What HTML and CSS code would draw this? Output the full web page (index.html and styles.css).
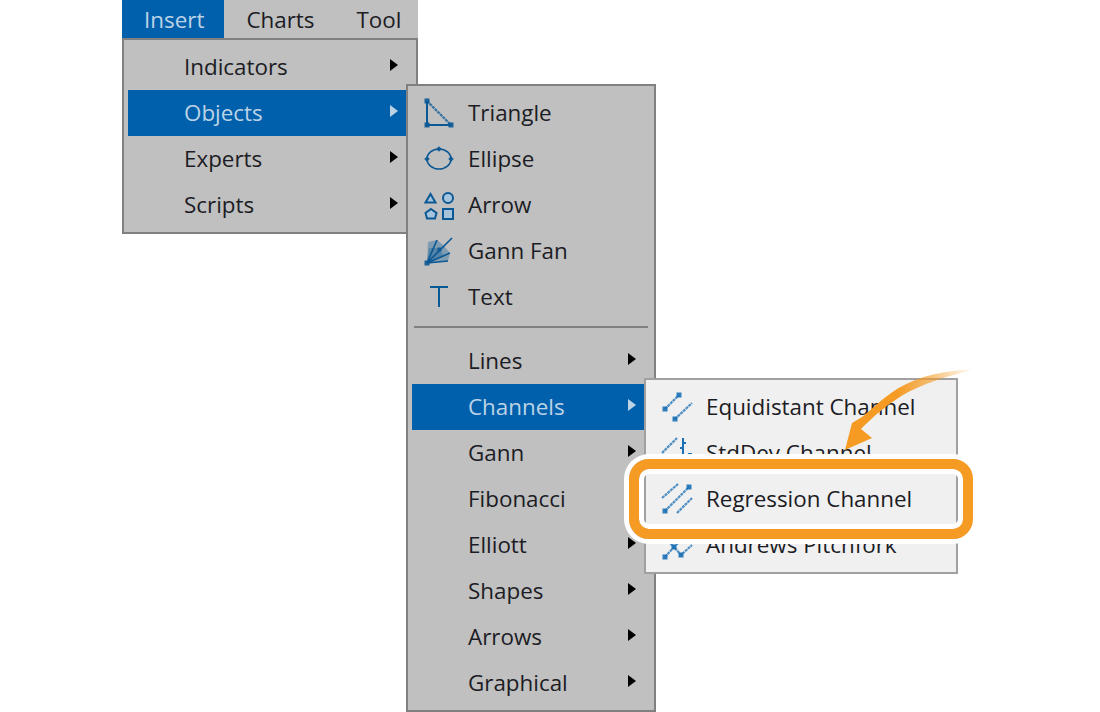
FILE: index.html
```html
<!DOCTYPE html>
<html lang="en">
<head>
<meta charset="utf-8">
<title>Insert menu</title>
<link rel="stylesheet" href="styles.css">
</head>
<body>
<div class="page">
  <div class="menubar">
    <div class="bar-item active">Insert</div>
    <div class="bar-item">Charts</div>
    <div class="bar-item">Tool</div>
  </div>
  <div class="menu menu-root">
    <div class="item"><span class="slot"></span><span class="label">Indicators</span><span class="caret"></span></div>
    <div class="item active">
      <span class="slot"></span><span class="label">Objects</span><span class="caret"></span>
      <div class="menu flyout menu-objects">
        <div class="item">
          <span class="slot"><svg class="icon" viewBox="0 0 30 30"><path class="ln" d="M3 3V27H27"/><path class="ds" d="M3 3 27 27"/><rect class="nd" x=".5" y=".5" width="5" height="5"/><rect class="nd" x=".5" y="24.500" width="5" height="5"/><rect class="nd" x="24.500" y="24.500" width="5" height="5"/></svg></span>
          <span class="label">Triangle</span>
        </div>
        <div class="item">
          <span class="slot"><svg class="icon" viewBox="0 0 30 30"><ellipse class="ln thin" cx="15" cy="15" rx="12" ry="10"/><rect class="nd" x="13" y="3" width="4" height="4" transform="rotate(45 15 5)"/><rect class="nd" x="1" y="13" width="4" height="4" transform="rotate(45 3 15)"/><rect class="nd" x="25" y="13" width="4" height="4" transform="rotate(45 27 15)"/></svg></span>
          <span class="label">Ellipse</span>
        </div>
        <div class="item">
          <span class="slot"><svg class="icon" viewBox="0 0 30 30"><path class="shp" d="M6.500 4 11.500 12.500H1.500Z"/><circle class="shp" cx="24" cy="8" r="5"/><path class="shp" d="M7 19 12.500 23 11 28.500H3L1.500 23Z"/><rect class="shp" x="19" y="19" width="10" height="10"/></svg></span>
          <span class="label">Arrow</span>
        </div>
        <div class="item">
          <span class="slot"><svg class="icon" viewBox="0 0 30 30"><path class="fan" d="M3 27 4 6 13 4 19 9 26 17 24 25Z"/><path class="fan" d="M3 27 5 12 14 12 20 20Z"/><path class="ln thin" d="M3 27 28 2M3 27 13 4M3 27 26 17M3 27 24 25"/><rect class="nd" x=".5" y="24.500" width="5" height="5"/><rect class="nd" x="13.500" y="11.500" width="4" height="4"/></svg></span>
          <span class="label">Gann Fan</span>
        </div>
        <div class="item">
          <span class="slot"><svg class="icon" viewBox="0 0 30 30"><path class="ln" d="M6 5H24M15 5V25"/></svg></span>
          <span class="label">Text</span>
        </div>
        <div class="sep"></div>
        <div class="item"><span class="slot"></span><span class="label">Lines</span><span class="caret"></span></div>
        <div class="item active">
          <span class="slot"></span><span class="label">Channels</span><span class="caret"></span>
          <div class="menu flyout menu-channels">
            <div class="item">
              <span class="slot"><svg class="icon light" viewBox="0 0 30 30"><path class="ds" d="M3 17 17 3M13 27 30 11"/><rect class="nd" x=".5" y="14.500" width="5" height="5"/><rect class="nd" x="14.500" y=".5" width="5" height="5"/><rect class="nd" x="10.500" y="24.500" width="5" height="5"/></svg></span>
              <span class="label">Equidistant Channel</span>
            </div>
            <div class="item">
              <span class="slot"><svg class="icon light" viewBox="0 0 30 30"><path class="ds" d="M0 15 15 0M0 27 8 19"/><path class="ln" d="M21 0V24M18 10H21M21 5H24M26 16H30"/></svg></span>
              <span class="label">StdDev Channel</span>
            </div>
            <div class="item">
              <span class="slot"><svg class="icon light" viewBox="0 0 30 30"><path class="ds" d="M0 14 16 0M3 27 27 3M15 29 30 14"/><rect class="nd" x=".5" y="24.500" width="5" height="5"/><rect class="nd" x="24.500" y=".5" width="5" height="5"/></svg></span>
              <span class="label">Regression Channel</span>
            </div>
            <div class="item">
              <span class="slot"><svg class="icon light" viewBox="0 0 30 30"><path class="ds" d="M3 27 12 17 19 25 30 15M6 11 12 17 18 11"/><rect class="nd" x=".5" y="24.500" width="5" height="5"/><rect class="nd" x="9.500" y="14.500" width="5" height="5"/><rect class="nd" x="16.500" y="22.500" width="5" height="5"/></svg></span>
              <span class="label">Andrews Pitchfork</span>
            </div>
          </div>
        </div>
        <div class="item"><span class="slot"></span><span class="label">Gann</span><span class="caret"></span></div>
        <div class="item"><span class="slot"></span><span class="label">Fibonacci</span><span class="caret"></span></div>
        <div class="item"><span class="slot"></span><span class="label">Elliott</span><span class="caret"></span></div>
        <div class="item"><span class="slot"></span><span class="label">Shapes</span><span class="caret"></span></div>
        <div class="item"><span class="slot"></span><span class="label">Arrows</span><span class="caret"></span></div>
        <div class="item"><span class="slot"></span><span class="label">Graphical</span><span class="caret"></span></div>
      </div>
    </div>
    <div class="item"><span class="slot"></span><span class="label">Experts</span><span class="caret"></span></div>
    <div class="item"><span class="slot"></span><span class="label">Scripts</span><span class="caret"></span></div>
  </div>
  <svg class="pointer" viewBox="0 0 140 90">
    <defs>
      <linearGradient id="tail" x1="135" y1="0" x2="57" y2="0" gradientUnits="userSpaceOnUse">
        <stop offset="0" stop-color="#f59b23" stop-opacity="0"/>
        <stop offset="0.55" stop-color="#f59b23" stop-opacity="0.6"/>
        <stop offset="1" stop-color="#f59b23"/>
      </linearGradient>
    </defs>
    <path fill="url(#tail)" d="M135 4C105 6 80 10 57 24C44 32 32 44 22 52L12 58L5 85L32 73L21 64C33 52 45 41 63 30C82 19 105 12 135 4Z"/>
  </svg>
  <div class="callout"></div>
</div>
</body>
</html>
```
FILE: styles.css
```css
* { box-sizing: border-box; }
html, body { margin: 0; padding: 0; background: #fff; }
.page {
  position: relative;
  width: 1100px;
  height: 712px;
  overflow: hidden;
  font-family: "Open Sans", "Noto Sans", sans-serif;
  font-size: 22.4px;
  color: #1c1c24;
}
.menubar {
  display: flex;
  width: 296px;
  height: 38px;
  margin-left: 122px;
  background: #c0c0c0;
  overflow: hidden;
}
.bar-item {
  height: 38px;
  padding: 0 20px 0 22px;
  line-height: 39px;
  white-space: nowrap;
}
.bar-item.active { background: #0060ac; color: #bcd3e6; }
.menu {
  display: flex;
  flex-direction: column;
  padding: 4px;
  background: #c0c0c0;
  border: 2px solid #808080;
}
.menu-root { width: 296px; margin-left: 122px; height: 196px; }
.flyout { position: absolute; top: -6px; left: calc(100% - 6px); }
.menu-objects { width: 250px; height: 628px; }
.menu-channels { width: 314px; height: 196px; background: #f0f0f0; border-color: #a0a0a0; }
.item {
  position: relative;
  display: flex;
  align-items: center;
  flex: none;
  height: 46px;
  white-space: nowrap;
}
.item.active { background: #0060ac; }
.item.active > .label { color: #bcd3e6; }
.item.active > .caret { border-left-color: #bcd3e6; }
.menu .menu .label { color: #1c1c24; }
.menu .item.active .menu .label { color: #1c1c24; }
.menu .menu > .item.active > .label { color: #bcd3e6; }
.menu .menu .menu > .item > .label { color: #1c1c24; }
.slot { display: flex; flex: none; width: 56px; padding-left: 12px; }
.label { flex: 1; line-height: 46px; }
.caret {
  flex: none;
  width: 0;
  height: 0;
  margin-right: 14px;
  margin-top: -4px;
  border-left: 8px solid #000;
  border-top: 6px solid transparent;
  border-bottom: 6px solid transparent;
}
.sep { flex: none; height: 2px; margin: 6px 0 10px 2px; width: 234px; background: #808080; }
.icon { display: block; width: 30px; height: 30px; overflow: visible; }
.ln { fill: none; stroke: #0a5894; stroke-width: 2; }
.ln.thin { stroke-width: 1.6; }
.nd { fill: #0a5894; opacity: 0.9; }
.shp { fill: #a6c4dc; stroke: #0a5894; stroke-width: 2; }
.fan { fill: #0a5894; opacity: 0.35; }
.ds { fill: none; stroke: #0a5894; stroke-width: 2.2; stroke-dasharray: 3 0.7; opacity: 0.75; }
.light .ln { stroke: #1a6fb5; }
.light .nd { fill: #1a6fb5; }
.light .ds { stroke: #1a6fb5; }
.pointer { position: absolute; left: 840px; top: 365px; width: 140px; height: 90px; }
.callout {
  position: absolute;
  left: 629px;
  top: 459px;
  width: 344px;
  height: 80px;
  border: 10px solid #f59b23;
  border-radius: 20px;
  box-shadow: 0 0 0 5px #fff, inset 0 0 0 5px #fff;
}
```
